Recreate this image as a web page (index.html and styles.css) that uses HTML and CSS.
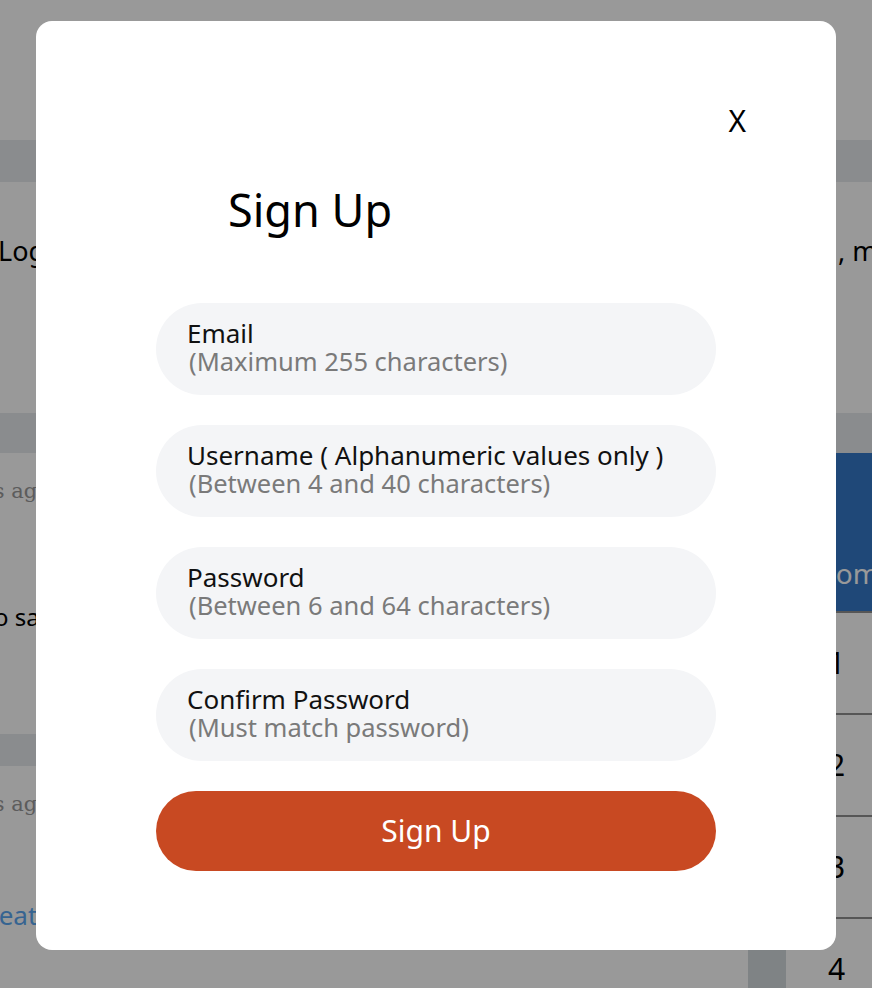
FILE: index.html
```html
<!DOCTYPE html>
<html lang="en">
<head>
<meta charset="utf-8">
<title>Sign Up</title>
<link rel="stylesheet" href="styles.css">
</head>
<body>
<div class="page">
  <header class="topbar"></header>
  <div class="band band-top"></div>
  <section class="intro">
    <div class="intro-row">
      <span class="intro-left">Log in to join the discussion</span>
      <span class="intro-right">, more</span>
    </div>
  </section>
  <div class="band band-mid"></div>
  <div class="columns">
    <main class="feed">
      <article class="post post-first">
        <p class="meta">3 hours ago</p>
        <p class="body">Nothing to say here</p>
      </article>
      <div class="band band-small"></div>
      <article class="post post-second">
        <p class="meta">3 hours ago</p>
        <p class="link">Create a new post</p>
      </article>
    </main>
    <aside class="side">
      <div class="side-head"><span class="side-title">Top Communities</span></div>
      <div class="rank-row"><span class="rank-cell"></span><span class="rank-num">1</span></div>
      <div class="rank-row"><span class="rank-cell"></span><span class="rank-num">2</span></div>
      <div class="rank-row"><span class="rank-cell"></span><span class="rank-num">3</span></div>
      <div class="rank-row"><span class="rank-cell"></span><span class="rank-num">4</span></div>
    </aside>
  </div>
</div>

<div class="overlay"></div>

<div class="modal" role="dialog" aria-labelledby="signup-title">
  <div class="modal-top">
    <button class="close" type="button" aria-label="Close">X</button>
  </div>
  <h1 class="modal-title" id="signup-title">Sign Up</h1>
  <form class="signup-form">
    <label class="field">
      <span class="field-label">Email</span>
      <span class="field-hint">(Maximum 255 characters)</span>
    </label>
    <label class="field">
      <span class="field-label">Username ( Alphanumeric values only )</span>
      <span class="field-hint">(Between 4 and 40 characters)</span>
    </label>
    <label class="field">
      <span class="field-label">Password</span>
      <span class="field-hint">(Between 6 and 64 characters)</span>
    </label>
    <label class="field">
      <span class="field-label">Confirm Password</span>
      <span class="field-hint">(Must match password)</span>
    </label>
    <button class="submit" type="button">Sign Up</button>
  </form>
</div>
</body>
</html>
```

FILE: styles.css
```css
* {
  box-sizing: border-box;
}

html, body {
  margin: 0;
  padding: 0;
  height: 100%;
  overflow: hidden;
}

body {
  background: #ffffff;
  font-family: "Noto Sans", "Open Sans", sans-serif;
  color: #000;
}

/* ---------- background page ---------- */
.page {
  width: 872px;
  height: 988px;
  overflow: hidden;
}

.topbar {
  height: 140px;
}

.band {
  background: #e6e9ed;
}

.band-top {
  height: 42px;
}

.band-mid {
  height: 40px;
}

.band-small {
  height: 32px;
}

.intro {
  height: 231px;
  padding-top: 52px;
}

.intro-row {
  display: grid;
  grid-template-columns: 838px 1fr;
  font-size: 27px;
  line-height: 34px;
  white-space: nowrap;
}

.intro-left,
.intro-right {
  overflow: hidden;
}

.intro-left {
  margin-left: -2px;
}

.columns {
  display: grid;
  grid-template-columns: 748px 124px;
}

.feed {
  overflow: hidden;
  white-space: nowrap;
}

.post p {
  margin: 0;
}

.post-first {
  height: 281px;
  padding-top: 24px;
}

.post-second {
  height: 220px;
  padding-top: 24px;
}

.meta {
  font-family: "DejaVu Serif", "Liberation Serif", serif;
  font-size: 21px;
  line-height: 28px;
  color: #9a9a9a;
  margin-left: -76px !important;
}

.body {
  margin-top: 96px !important;
  font-size: 24px;
  line-height: 32px;
  margin-left: -113px !important;
}

.link {
  margin-top: 80px !important;
  font-size: 26px;
  line-height: 34px;
  color: #5aa7f2;
  margin-left: -28px !important;
}

.side {
  overflow: hidden;
  white-space: nowrap;
}

.side-head {
  height: 160px;
  background: #3478c9;
  border-bottom: 2px solid #8f8f8f;
  padding: 102px 0 0 15px;
  font-size: 28px;
  line-height: 36px;
  color: #ffffff;
}

.rank-row {
  display: flex;
  height: 102px;
  border-bottom: 2px solid #8f8f8f;
}

.rank-cell {
  width: 38px;
  background: #d4dade;
  margin-top: 30px;
}

.rank-num {
  padding-left: 42px;
  font-size: 30px;
  line-height: 100px;
}

/* ---------- overlay + modal ---------- */
.overlay {
  position: fixed;
  inset: 0;
  background: rgba(0, 0, 0, 0.4);
}

.modal {
  position: fixed;
  top: 21px;
  left: 36px;
  width: 800px;
  height: 929px;
  background: #ffffff;
  border-radius: 16px;
  padding-top: 85px;
}

.modal-top {
  display: flex;
  justify-content: flex-end;
  padding-right: 90px;
}

.close {
  border: none;
  background: none;
  padding: 0;
  font-family: "Noto Sans", sans-serif;
  font-size: 30px;
  line-height: 30px;
  color: #000;
  cursor: pointer;
}

.modal-title {
  margin: 51px 0 0 192px;
  font-size: 45px;
  line-height: 45px;
  font-weight: 400;
}

.signup-form {
  margin: 71px auto 0;
  width: 560px;
  display: flex;
  flex-direction: column;
  gap: 30px;
}

.field {
  display: flex;
  flex-direction: column;
  height: 92px;
  padding: 16px 31px 20px;
  border-radius: 46px;
  background: #f4f5f7;
  line-height: 28px;
  white-space: nowrap;
}

.field-label {
  font-size: 26px;
  color: #111;
}

.field-hint {
  font-size: 25.5px;
  color: #7a7a7a;
  padding-left: 2px;
}

.submit {
  height: 80px;
  border: none;
  border-radius: 40px;
  background: #c84922;
  color: #ffffff;
  font-family: "Noto Sans", sans-serif;
  font-size: 30px;
  line-height: 80px;
  padding: 0;
  cursor: pointer;
}
```
